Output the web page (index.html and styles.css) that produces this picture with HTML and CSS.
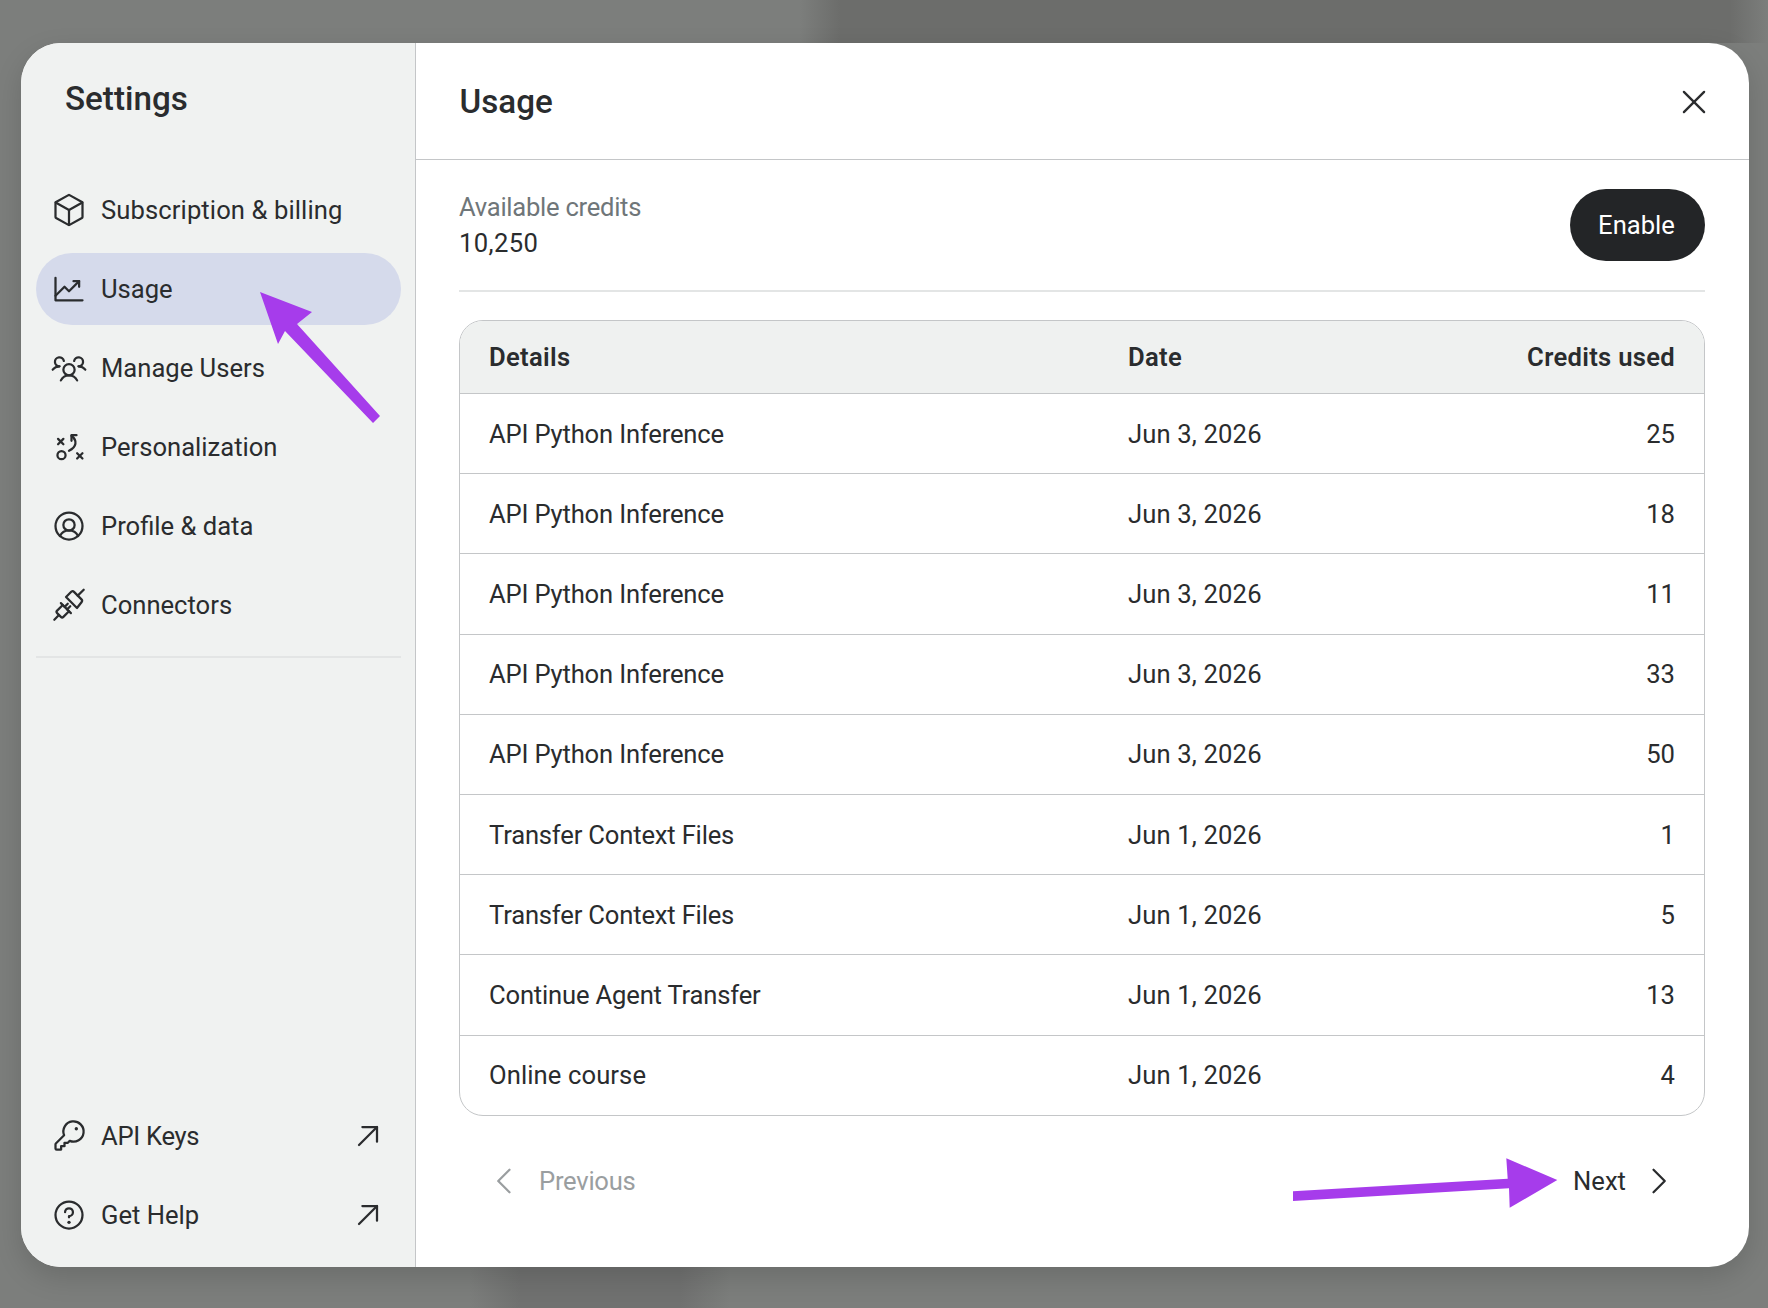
FILE: index.html
```html
<!DOCTYPE html>
<html lang="en">
<head>
    <meta charset="UTF-8">
    <title>Settings - Usage</title>
    <link rel="stylesheet" href="styles.css">
</head>
<body>
    <div class="modal">
        <aside class="sidebar">
            <h2 class="sidebar-title">Settings</h2>
            <nav class="nav-list">
                <a class="nav-item">
                    <svg class="icon" viewBox="0 0 256 256"><path d="M224,177.32V78.68a8,8,0,0,0-4.07-7l-88-49.5a7.83,7.83,0,0,0-7.86,0l-88,49.5a8,8,0,0,0-4.07,7v98.64a8,8,0,0,0,4.07,7l88,49.5a7.83,7.83,0,0,0,7.86,0l88-49.5A8,8,0,0,0,224,177.32Z"/><polyline points="33 74 128 128 223 74"/><line x1="128" y1="128" x2="128" y2="234"/></svg>
                    <span class="wide-label">Subscription &amp; billing</span>
                </a>
                <a class="nav-item active">
                    <svg class="icon" viewBox="0 0 256 256"><polyline points="224 208 32 208 32 48"/><polyline points="200 72 128 144 96 112 32 176"/><polyline points="200 112 200 72 160 72"/></svg>
                    Usage
                </a>
                <a class="nav-item">
                    <svg class="icon" viewBox="0 0 256 256"><circle cx="128" cy="140" r="40"/><path d="M196,116a59.83,59.83,0,0,1,48,24"/><path d="M12,140a59.83,59.83,0,0,1,48-24"/><path d="M70.4,216a64.07,64.07,0,0,1,115.2,0"/><path d="M60,116A32,32,0,1,1,91.43,78"/><path d="M164.57,78A32,32,0,1,1,196,116"/></svg>
                    Manage Users
                </a>
                <a class="nav-item">
                    <svg class="icon icon-custom" viewBox="12.8 12.8 230.4 230.4"><circle cx="80" cy="180" r="26"/><line x1="58" y1="76" x2="92" y2="110"/><line x1="92" y1="76" x2="58" y2="110"/><line x1="180" y1="168" x2="214" y2="202"/><line x1="214" y1="168" x2="180" y2="202"/><path d="M128 152C176 128 184 88 144 56"/><polyline points="176 52 144 52 144 88"/></svg>
                    Personalization
                </a>
                <a class="nav-item">
                    <svg class="icon" viewBox="0 0 256 256"><circle cx="128" cy="128" r="96"/><circle cx="128" cy="120" r="40"/><path d="M63.8,199.37a72,72,0,0,1,128.4,0"/></svg>
                    Profile &amp; data
                </a>
                <a class="nav-item">
                    <svg class="icon icon-custom" viewBox="12.8 12.8 230.4 230.4"><path d="M109 77L144 42Q152 36 160 44L208 92Q216 100 208 110L179 147Z"/><line x1="184" y1="68" x2="222" y2="30"/><line x1="76" y1="116" x2="140" y2="180"/><path d="M88 128L52 164Q44 172 52 180L76 204Q84 212 92 204L128 168"/><line x1="62" y1="194" x2="34" y2="222"/><line x1="100" y1="140" x2="120" y2="120"/><line x1="116" y1="156" x2="136" y2="136"/></svg>
                    Connectors
                </a>
            </nav>
            <div class="sidebar-divider"></div>
            <nav class="nav-list nav-bottom">
                <a class="nav-item">
                    <svg class="icon" viewBox="0 0 256 256"><path d="M93.17,122.83a72,72,0,1,1,40,40h0L120,176H96v24H72v24H40a8,8,0,0,1-8-8V187.31a8,8,0,0,1,2.34-5.65l58.83-58.83Z"/><circle class="dot" cx="180" cy="76" r="12"/></svg>
                    <span class="tight-label">API Keys</span>
                    <svg class="icon external" viewBox="0 0 256 256"><line x1="64" y1="192" x2="192" y2="64"/><polyline points="88 64 192 64 192 168"/></svg>
                </a>
                <a class="nav-item">
                    <svg class="icon" viewBox="0 0 256 256"><circle cx="128" cy="128" r="96"/><circle class="dot" cx="128" cy="180" r="12"/><path d="M128,144v-8a28,28,0,1,0-28-28"/></svg>
                    Get Help
                    <svg class="icon external" viewBox="0 0 256 256"><line x1="64" y1="192" x2="192" y2="64"/><polyline points="88 64 192 64 192 168"/></svg>
                </a>
            </nav>
        </aside>

        <main class="content">
            <header class="content-header">
                <h1 class="content-title">Usage</h1>
                <svg class="icon close-icon" viewBox="0 0 256 256"><line x1="200" y1="56" x2="56" y2="200"/><line x1="200" y1="200" x2="56" y2="56"/></svg>
            </header>
            <div class="content-body">
                <div class="credits-row">
                    <div>
                        <div class="credits-label">Available credits</div>
                        <div class="credits-value">10,250</div>
                    </div>
                    <button class="enable-btn">Enable</button>
                </div>

                <div class="table-wrap">
                    <table class="usage-table">
                        <thead>
                            <tr><th>Details</th><th>Date</th><th class="num">Credits used</th></tr>
                        </thead>
                        <tbody>
                            <tr><td>API Python Inference</td><td>Jun 3, 2026</td><td class="num">25</td></tr>
                            <tr><td>API Python Inference</td><td>Jun 3, 2026</td><td class="num">18</td></tr>
                            <tr><td>API Python Inference</td><td>Jun 3, 2026</td><td class="num">11</td></tr>
                            <tr><td>API Python Inference</td><td>Jun 3, 2026</td><td class="num">33</td></tr>
                            <tr><td>API Python Inference</td><td>Jun 3, 2026</td><td class="num">50</td></tr>
                            <tr><td>Transfer Context Files</td><td>Jun 1, 2026</td><td class="num">1</td></tr>
                            <tr><td>Transfer Context Files</td><td>Jun 1, 2026</td><td class="num">5</td></tr>
                            <tr><td>Continue Agent Transfer</td><td>Jun 1, 2026</td><td class="num">13</td></tr>
                            <tr><td class="wide-cell">Online course</td><td>Jun 1, 2026</td><td class="num">4</td></tr>
                        </tbody>
                    </table>
                </div>

                <div class="pagination">
                    <a class="page-link disabled">
                        <svg class="icon" viewBox="0 0 256 256"><polyline points="160 208 80 128 160 48"/></svg>
                        Previous
                    </a>
                    <a class="page-link">
                        Next
                        <svg class="icon" viewBox="0 0 256 256"><polyline points="96 48 176 128 96 208"/></svg>
                    </a>
                </div>
            </div>
        </main>
    </div>

    <!-- annotation arrows drawn on top of the screenshot -->
    <svg class="annotations" viewBox="0 0 1768 1308">
        <polygon points="260,292 312,312 297,324 380,416 373,423 285,331 278,344"/>
        <polygon points="1293,1191.3 1507.7,1178.7 1506.3,1158.3 1557.3,1180 1509.7,1207.7 1509,1188.3 1293,1201"/>
    </svg>
</body>
</html>
```

FILE: styles.css
```css
html, body {
    margin: 0;
    height: 1308px;
    overflow: hidden;
}

body {
    position: relative;
    font-family: Roboto, sans-serif;
    color: #2a2c2e;
    background-color: #7c7e7c;
    background-image:
        linear-gradient(90deg, rgba(108, 109, 107, 0) 800px, #6c6d6b 840px, #6c6d6b 1730px, rgba(108, 109, 107, 0) 1768px),
        linear-gradient(90deg, rgba(112, 113, 112, 0) 470px, #707170 520px, #707170 680px, rgba(112, 113, 112, 0) 730px);
    background-size: 100% 43px, 100% 43px;
    background-position: 0 0, 0 100%;
    background-repeat: no-repeat;
}

.modal {
    box-sizing: border-box;
    display: flex;
    width: 1728px;
    height: 1224px;
    margin-left: 21px;
    position: absolute;
    top: 43px;
    background: white;
    border-radius: 40px;
    box-shadow: 0 10px 28px rgba(0, 0, 0, 0.14);
    overflow: hidden;
}

.sidebar {
    box-sizing: border-box;
    width: 395px;
    flex-shrink: 0;
    display: flex;
    flex-direction: column;
    padding: 0 14px 16px 15px;
    background: #f0f2f1;
    border-right: 1.5px solid #c4c6c8;
}

.sidebar-title {
    margin: 0;
    height: 130.5px;
    padding: 32.5px 0 0 29px;
    box-sizing: border-box;
    font-size: 33.2px;
    line-height: 46px;
    font-weight: 500;
}

.nav-list {
    display: flex;
    flex-direction: column;
    gap: 7.2px;
}

.nav-bottom {
    margin-top: auto;
}

.nav-item {
    display: flex;
    align-items: center;
    gap: 14px;
    height: 72px;
    padding: 0 15px;
    font-size: 25.6px;
    border-radius: 36px;
}

.nav-item.active {
    background: #d5daeb;
}

.wide-label {
    letter-spacing: 0.1px;
}

.tight-label {
    letter-spacing: -0.3px;
}

.icon {
    width: 36px;
    height: 36px;
    flex-shrink: 0;
    fill: none;
    stroke: currentColor;
    stroke-width: 16;
    stroke-linecap: round;
    stroke-linejoin: round;
}

.icon-custom {
    stroke-width: 14.4;
}

.icon .dot {
    fill: currentColor;
    stroke: none;
}

.external {
    margin-left: auto;
}

.sidebar-divider {
    height: 2px;
    margin-top: 14.5px;
    background: #e3e5e5;
}

.content {
    flex: 1;
    display: flex;
    flex-direction: column;
    min-width: 0;
}

.content-header {
    box-sizing: border-box;
    height: 117px;
    flex-shrink: 0;
    display: flex;
    align-items: center;
    justify-content: space-between;
    padding: 0 37px 0 43.5px;
    border-bottom: 1.5px solid #c4c6c8;
}

.content-title {
    margin: 0;
    font-size: 33.2px;
    font-weight: 500;
}

.close-icon {
    margin-top: 2px;
}

.content-body {
    padding: 0 44px 0 43px;
}

.credits-row {
    display: flex;
    align-items: center;
    justify-content: space-between;
    padding: 29px 0 29px 0;
    border-bottom: 2px solid #e3e5e5;
}

.credits-label {
    font-size: 25.6px;
    line-height: 36px;
    letter-spacing: -0.27px;
    color: #6f7679;
}

.credits-value {
    font-size: 25.6px;
    line-height: 36px;
    letter-spacing: 0.4px;
}

.enable-btn {
    width: 135px;
    height: 72px;
    padding: 0 2px 0 0;
    border: none;
    border-radius: 36px;
    background: #232527;
    color: white;
    font-family: Roboto, sans-serif;
    font-size: 25.6px;
}

.table-wrap {
    margin-top: 28px;
    border: 1.5px solid #c4c6c8;
    border-radius: 24px;
    overflow: hidden;
}

.usage-table {
    width: 100%;
    border-collapse: collapse;
    table-layout: fixed;
    font-size: 25.6px;
}

.usage-table th {
    height: 72px;
    padding: 0 29px;
    text-align: left;
    font-weight: 600;
    letter-spacing: 0.3px;
    background: #eff1f0;
    border-bottom: 1.5px solid #c4c6c8;
}

.usage-table th:first-child,
.usage-table td:first-child {
    width: 610px;
}

.usage-table td:first-child {
    letter-spacing: -0.18px;
}

.usage-table td.wide-cell {
    letter-spacing: 0.1px;
}

.usage-table th:nth-child(2),
.usage-table td:nth-child(2) {
    padding-left: 0;
}

.usage-table td:nth-child(2) {
    letter-spacing: 0.15px;
}

.usage-table td {
    height: 80.2px;
    box-sizing: border-box;
    padding: 0 29px;
    border-bottom: 1.5px solid #c4c6c8;
}

.usage-table tr:last-child td {
    border-bottom: none;
}

.usage-table .num {
    text-align: right;
}

.pagination {
    display: flex;
    align-items: center;
    justify-content: space-between;
    margin-top: 47px;
    padding: 0 29px 0 28px;
}

.page-link {
    display: flex;
    align-items: center;
    gap: 14px;
    font-size: 25.6px;
}

.page-link.disabled {
    gap: 16px;
    letter-spacing: -0.25px;
    color: #9a9ea0;
}

.annotations {
    position: absolute;
    top: 0;
    left: 0;
    width: 1768px;
    height: 1308px;
    fill: #a63ceb;
}
```
